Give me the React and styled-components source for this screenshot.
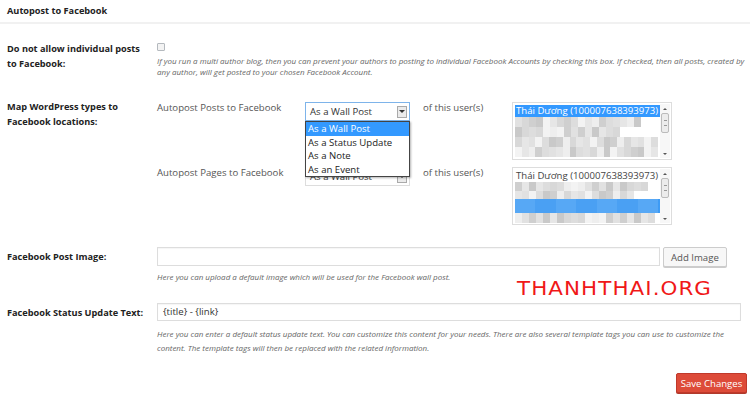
import React from 'react';
import styled, { createGlobalStyle } from 'styled-components';

const Global = createGlobalStyle`
  html, body { margin: 0; padding: 0; background: #fff; }
  body { font-family: "Open Sans", "DejaVu Sans", sans-serif; color: #555; }
  * { box-sizing: border-box; }
`;

const Page = styled.div`
  position: relative;
  width: 750px;
  height: 400px;
  overflow: hidden;
  background: #fff;
`;

const Header = styled.div`
  height: 24px;
  padding: 3px 7px 0;
  border-bottom: 2px solid #f1f1f1;
  font-size: 9.2px;
  font-weight: 700;
  line-height: 15px;
  color: #222;
`;

const Form = styled.div`
  padding: 0 0 0 7px;
`;

const Row = styled.div`
  display: grid;
  grid-template-columns: 150px 1fr;
  margin-top: ${p => p.$top}px;
`;

const Label = styled.div`
  font-size: 9.2px;
  font-weight: 700;
  color: #222;
  line-height: ${p => p.$lh || 15}px;
  padding-top: ${p => p.$pt || 0}px;
`;

const Field = styled.div`
  padding-top: ${p => p.$pt || 0}px;
  padding-right: 4px;
`;

const Check = styled.input.attrs({ type: 'checkbox' })`
  appearance: none;
  display: block;
  width: 8px;
  height: 8px;
  margin: 2px 0 4px 0;
  border: 1px solid #b4b9be;
  background: #f3f3f3;
  border-radius: 1px;
`;

const Desc = styled.div`
  font-size: 8px;
  font-style: italic;
  color: #666;
  line-height: ${p => p.$lh || 11}px;
  margin-top: ${p => p.$mt || 0}px;
`;

const MapGrid = styled.div`
  display: grid;
  grid-template-columns: 148px 118px 89px 160px;
  grid-auto-rows: 58px;
  row-gap: 7px;
  position: relative;
`;

const SubText = styled.div`
  font-size: 9.6px;
  line-height: 12px;
  color: #555;
`;

const Select = styled.div`
  width: 105px;
  height: 19px;
  border: 1px solid ${p => (p.$focus ? '#7eb4ea' : '#ddd')};
  background: #fff;
  display: flex;
  align-items: center;
  justify-content: space-between;
  padding: 0 2px 0 4px;
  font-size: 9.6px;
  color: #333;
`;

const Arrow = styled.span`
  width: 10px;
  height: 12px;
  border: 1px solid #aaa;
  background: #ebebeb;
  display: flex;
  align-items: center;
  justify-content: center;
  &::after {
    content: '';
    border-left: 3px solid transparent;
    border-right: 3px solid transparent;
    border-top: 3px solid #333;
  }
`;

const Dropdown = styled.div`
  position: absolute;
  left: 148px;
  top: 19px;
  width: 105px;
  border: 1px solid #444;
  background: #fff;
  box-shadow: 1px 1px 2px rgba(0, 0, 0, 0.3);
  z-index: 2;
`;

const Option = styled.div`
  height: 13.5px;
  line-height: 13.5px;
  padding-left: 2px;
  font-size: 9.6px;
  color: ${p => (p.$active ? '#fff' : '#222')};
  background: ${p => (p.$active ? '#3399ff' : '#fff')};
`;

const ListBox = styled.div`
  width: 160px;
  height: 58px;
  border: 1px solid #ddd;
  background: #fff;
  display: flex;
  overflow: hidden;
`;

const ListItems = styled.div`
  flex: 1;
  padding: 2px 0 0 2px;
  overflow: hidden;
`;

const Item = styled.div`
  height: 12px;
  line-height: 12px;
  font-size: 9.6px;
  white-space: nowrap;
  padding-left: 1px;
  color: ${p => (p.$sel ? '#fff' : '#444')};
  background: ${p => (p.$sel ? '#3399ff' : 'transparent')};
`;

const Mosaic = styled.div`
  display: flex;
  height: ${p => p.$h || 10}px;
  padding-right: 2px;
  background: ${p => (p.$sel ? '#3d9bf5' : 'transparent')};
`;

const Cell = styled.span`
  width: 7px;
  height: 100%;
`;

const Scroll = styled.div`
  width: 10px;
  margin: 1px 1px 1px 0;
  display: flex;
  flex-direction: column;
  align-items: center;
  background: #f7f7f7;
`;

const ScrollArrow = styled.span`
  height: 9px;
  display: flex;
  align-items: center;
  &::after {
    content: '';
    border-left: 2px solid transparent;
    border-right: 2px solid transparent;
    ${p => (p.$up ? 'border-bottom: 2px solid #555;' : 'border-top: 2px solid #555;')}
  }
`;

const Thumb = styled.span`
  width: 8px;
  height: 20px;
  border: 1px solid #bbb;
  border-radius: 2px;
  background: #ececec;
  display: flex;
  align-items: center;
  justify-content: center;
  &::after {
    content: '';
    width: 3px;
    height: 4px;
    border-top: 1px solid #999;
    border-bottom: 1px solid #999;
  }
`;

const Spacer = styled.span`
  flex: 1;
`;

const InputRow = styled.div`
  display: flex;
  align-items: flex-start;
  gap: 3px;
`;

const TextInput = styled.div`
  width: ${p => p.$w}px;
  height: ${p => p.$h || 19}px;
  border: 1px solid #ddd;
  box-shadow: inset 0 1px 1px rgba(0, 0, 0, 0.04);
  background: #fff;
  font-size: 9.6px;
  line-height: ${p => (p.$h || 19) - 2}px;
  padding-left: 5px;
  color: #333;
`;

const Button = styled.button`
  height: 20px;
  padding: 0 7px;
  border: 1px solid #ccc;
  border-radius: 2px;
  background: #f7f7f7;
  box-shadow: 0 1px 0 #ccc;
  font-family: "Open Sans", sans-serif;
  font-size: 9.6px;
  color: #555;
  cursor: pointer;
`;

const Footer = styled.div`
  display: flex;
  justify-content: flex-end;
  margin-top: 18px;
  padding-right: 3px;
`;

const SaveButton = styled.button`
  height: 20px;
  width: 71px;
  padding: 0;
  border: 1px solid #c0392b;
  border-radius: 2px;
  background: #dd4b39;
  box-shadow: 0 1px 0 #b03a2c;
  font-family: "Open Sans", sans-serif;
  font-size: 9.6px;
  color: #fff;
`;

const Watermark = styled.div`
  position: absolute;
  left: 517px;
  top: 278px;
  font-family: "DejaVu Sans", sans-serif;
  font-size: 20px;
  line-height: 20px;
  letter-spacing: 1px;
  color: #f01818;
  transform-origin: left top;
  transform: scaleX(1.07);
`;

// pseudo random grey blocks standing in for the blurred account names
const greys = ['#eee', '#ddd', '#e6e6e6', '#cfcfcf', '#f3f3f3', '#d8d8d8', '#c9c9c9', '#e1e1e1'];
const blues = ['#3d9bf5', '#57a8f5', '#3a95ee', '#6db3f6', '#4aa0f3', '#2f8fea'];

function MosaicRow({ seed, count = 20, h, sel }) {
  const pal = sel ? blues : greys;
  const cells = Array.from({ length: count }, (_, i) => pal[(seed * 7 + i * 5 + ((i * seed) % 3)) % pal.length]);
  return (
    <Mosaic $h={h} $sel={sel}>
      {cells.map((c, i) => (
        <Cell key={i} style={{ background: c }} />
      ))}
    </Mosaic>
  );
}

function ScrollBar() {
  return (
    <Scroll>
      <ScrollArrow $up />
      <Thumb />
      <Spacer />
      <ScrollArrow />
    </Scroll>
  );
}

const name = 'Thái Dương (100007638393973)';

export default function App() {
  return (
    <Page>
      <Global />
      <Header>Autopost to Facebook</Header>
      <Form>
        <Row $top={17}>
          <Label>
            Do not allow individual posts
            <br />
            to Facebook:
          </Label>
          <Field>
            <Check />
            <Desc>
              If you run a multi author blog, then you can prevent your authors to posting to individual Facebook
              Accounts by checking this box. If checked, then all posts, created by any author, will get posted to your
              chosen Facebook Account.
            </Desc>
          </Field>
        </Row>

        <Row $top={22}>
          <Label>
            Map WordPress types to
            <br />
            Facebook locations:
          </Label>
          <Field $pt={3}>
            <MapGrid>
              <SubText>Autopost Posts to Facebook</SubText>
              <div>
                <Select $focus>
                  As a Wall Post
                  <Arrow />
                </Select>
              </div>
              <SubText>of this user(s)</SubText>
              <ListBox>
                <ListItems>
                  <Item $sel>{name}</Item>
                  <MosaicRow seed={1} count={18} />
                  <MosaicRow seed={2} count={15} />
                  <MosaicRow seed={3} count={21} />
                  <MosaicRow seed={4} count={21} />
                </ListItems>
                <ScrollBar />
              </ListBox>

              <SubText>Autopost Pages to Facebook</SubText>
              <div>
                <Select>
                  As a Wall Post
                  <Arrow />
                </Select>
              </div>
              <SubText>of this user(s)</SubText>
              <ListBox>
                <ListItems>
                  <Item>{name}</Item>
                  <MosaicRow seed={5} count={19} h={9} />
                  <MosaicRow seed={6} count={17} h={8} />
                  <MosaicRow seed={7} count={21} h={14} sel />
                  <MosaicRow seed={8} count={20} />
                </ListItems>
                <ScrollBar />
              </ListBox>

              <Dropdown>
                <Option $active>As a Wall Post</Option>
                <Option>As a Status Update</Option>
                <Option>As a Note</Option>
                <Option>As an Event</Option>
              </Dropdown>
            </MapGrid>
          </Field>
        </Row>

        <Row $top={22}>
          <Label $lh={19}>Facebook Post Image:</Label>
          <Field>
            <InputRow>
              <TextInput $w={503} />
              <Button>Add Image</Button>
            </InputRow>
            <Desc $mt={4}>Here you can upload a default image which will be used for the Facebook wall post.</Desc>
          </Field>
        </Row>

        <Row $top={21}>
          <Label $lh={19}>Facebook Status Update Text:</Label>
          <Field>
            <TextInput $w={584} $h={18}>
              {'{title} - {link}'}
            </TextInput>
            <Desc $mt={6} $lh={14}>
              Here you can enter a default status update text. You can customize this content for your needs. There
              are also several template tags you can use to customize the content. The template tags will then be
              replaced with the related information.
            </Desc>
          </Field>
        </Row>

        <Footer>
          <SaveButton>Save Changes</SaveButton>
        </Footer>
      </Form>
      <Watermark>THANHTHAI.ORG</Watermark>
    </Page>
  );
}
